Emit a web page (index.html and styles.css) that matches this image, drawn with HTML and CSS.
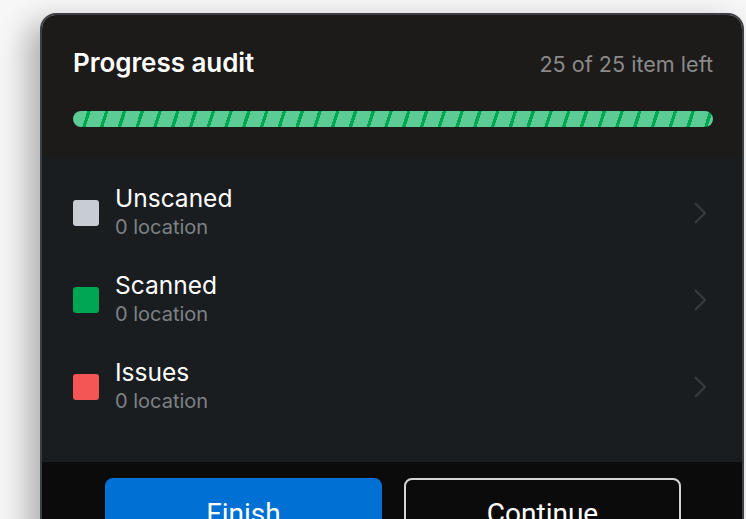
FILE: index.html
```html
<!DOCTYPE html>
<html lang="en">
<head>
<meta charset="utf-8">
<title>Progress audit</title>
<link rel="stylesheet" href="styles.css">
</head>
<body>
<div class="panel">
  <header class="head">
    <div class="head-row">
      <h1 class="title">Progress audit</h1>
      <span class="count">25 of 25 item left</span>
    </div>
    <div class="bar"></div>
  </header>
  <ul class="list">
    <li class="row">
      <span class="swatch swatch-grey"></span>
      <div class="texts">
        <div class="name">Unscaned</div>
        <div class="sub">0 location</div>
      </div>
      <svg class="chev" width="14" height="24" viewBox="0 0 14 24"><path d="M2 2 L12 12 L2 22" fill="none" stroke="#363b40" stroke-width="2.2"/></svg>
    </li>
    <li class="row">
      <span class="swatch swatch-green"></span>
      <div class="texts">
        <div class="name">Scanned</div>
        <div class="sub">0 location</div>
      </div>
      <svg class="chev" width="14" height="24" viewBox="0 0 14 24"><path d="M2 2 L12 12 L2 22" fill="none" stroke="#363b40" stroke-width="2.2"/></svg>
    </li>
    <li class="row">
      <span class="swatch swatch-red"></span>
      <div class="texts">
        <div class="name">Issues</div>
        <div class="sub">0 location</div>
      </div>
      <svg class="chev" width="14" height="24" viewBox="0 0 14 24"><path d="M2 2 L12 12 L2 22" fill="none" stroke="#363b40" stroke-width="2.2"/></svg>
    </li>
  </ul>
  <footer class="foot">
    <button class="btn btn-primary">Finish</button>
    <button class="btn btn-outline">Continue</button>
  </footer>
</div>
</body>
</html>
```

FILE: styles.css
```css
html, body {
  margin: 0;
  padding: 0;
  height: 100%;
  overflow: hidden;
}
body {
  background: #f7f7f7;
  font-family: Inter, "Noto Sans", sans-serif;
  padding: 13px 0 0 40px;
  box-sizing: border-box;
}
.panel {
  width: 704px;
  border: 2px solid #3b3e42;
  border-bottom: none;
  border-radius: 16px 16px 0 0;
  overflow: hidden;
  box-shadow: -12px 10px 30px rgba(0, 0, 0, 0.3);
  box-sizing: border-box;
}
.head {
  background: #1d1a1a;
  padding: 33px 29px 29px 31px;
}
.head-row {
  display: flex;
  justify-content: space-between;
  align-items: baseline;
}
.title {
  margin: 0;
  color: #ffffff;
  font-size: 26px;
  font-weight: 600;
  line-height: 30px;
  letter-spacing: -0.05px;
}
.count {
  color: #8a8a8a;
  font-size: 21.6px;
  line-height: 30px;
}
.bar {
  margin-top: 32px;
  height: 16px;
  border-radius: 8px;
  background-color: #5ccb94;
  background-image: repeating-linear-gradient(108deg, #5ccb94 0px, #5ccb94 13.6px, #00a651 13.6px, #00a651 16.9px);
}
.list {
  list-style: none;
  margin: 0;
  background: #191d20;
  padding: 13px 0 32px 0;
}
.row {
  display: flex;
  align-items: center;
  height: 87px;
  padding: 0 35px 0 31px;
}
.swatch {
  width: 26px;
  height: 26px;
  border-radius: 3px;
  flex: none;
}
.swatch-grey { background: #c8ccd3; }
.swatch-green { background: #00a651; }
.swatch-red { background: #f45656; }
.texts {
  flex: 1;
  margin-left: 16px;
}
.name {
  color: #ffffff;
  font-size: 24.5px;
  line-height: 29px;
}
.sub {
  color: #7e8185;
  font-size: 20px;
  line-height: 28px;
}
.chev {
  flex: none;
}
.foot {
  background: #0b0b0b;
  display: flex;
  gap: 22px;
  padding: 16px 61px 20px 63px;
}
.btn {
  flex: 1 1 0;
  min-width: 0;
  box-sizing: border-box;
  padding: 0;
  height: 70px;
  border-radius: 8px;
  border: 2px solid transparent;
  font-family: Roboto, Inter, sans-serif;
  font-size: 28px;
  color: #ffffff;
  cursor: pointer;
}
.btn-primary {
  background: #0070d4;
  border-color: #0070d4;
}
.btn-outline {
  background: #0b0b0b;
  border-color: #d4d4d4;
}
```
